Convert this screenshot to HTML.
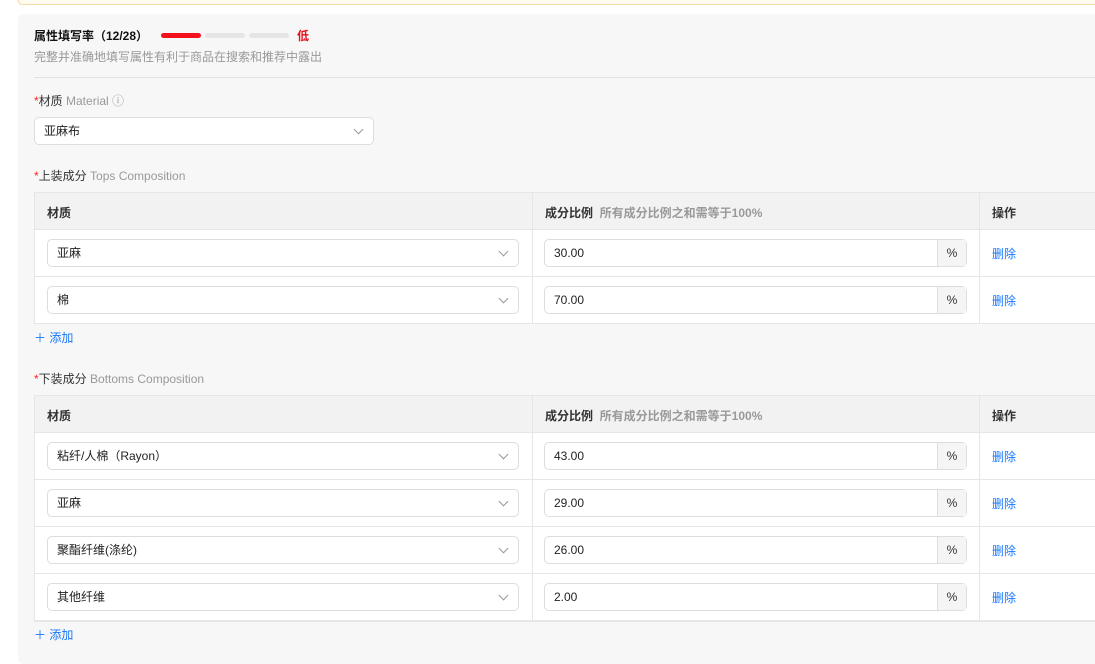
<!DOCTYPE html>
<html><head><meta charset="utf-8"><style>
*{box-sizing:border-box;margin:0;padding:0}
body{width:1095px;height:652px;overflow:hidden;background:#fff;font-family:"Liberation Sans","Noto Sans CJK SC",sans-serif;font-size:12px;color:#333;position:relative}
.banner{position:absolute;left:18px;top:-10px;width:1090px;height:15px;border:1px solid #f5d9a8;background:#fffbf0;border-radius:4px}
.panel{position:absolute;left:18px;top:14px;width:1090px;height:650px;background:#f7f7f7;border-radius:6px}
.abs{position:absolute;white-space:nowrap}
.title{left:34px;top:27px;font-weight:bold;font-size:12px;color:#111}
.bar{top:33px;height:5px;border-radius:3px}
.sub{left:34px;top:48px;color:#999}
.hr{left:34px;top:77px;width:1061px;height:1px;background:#e2e2e2}
.label{left:34px;font-size:12px;color:#333}
.label .r{color:#f22}.label .en{color:#999}
.sel{background:#fff;border:1px solid #ddd;border-radius:5px;height:28px;padding-left:9px;line-height:26px;color:#222}
.sel:after{content:"";position:absolute;right:11px;top:8px;width:6px;height:6px;border-right:1px solid #999;border-bottom:1px solid #999;transform:rotate(45deg)}
.tbl{left:34px;width:1070px;border:1px solid #e6e6e6;background:#fff}
.th{position:absolute;left:0;top:0;width:100%;height:37px;background:#f2f2f2;border-bottom:1px solid #e6e6e6}
.th span{position:absolute;top:11px;font-weight:bold;color:#333;white-space:nowrap}
.th span span{position:static;color:#999}
.vl{position:absolute;top:0;bottom:0;width:1px;background:#e6e6e6}
.row{position:absolute;left:0;width:100%;height:47px;border-bottom:1px solid #e6e6e6}
.inp{position:absolute;left:509px;top:9px;width:423px;height:28px;border:1px solid #ddd;border-radius:5px;background:#fff}
.inp .v{position:absolute;left:9px;top:6px;color:#222}
.inp .p{position:absolute;right:0;top:0;width:29px;height:26px;background:#f5f5f5;border-left:1px solid #ddd;text-align:center;line-height:26px;color:#333}
.del{position:absolute;left:957px;top:15px;color:#1677ff}
.add{left:34px;color:#1677ff}
</style></head><body>
<div class="banner"></div>
<div class="panel"></div>
<div class="abs title">属性填写率（12/28）</div>
<div class="abs bar" style="left:161px;width:40px;background:#f5111b"></div>
<div class="abs bar" style="left:205px;width:40px;background:#e5e5e5"></div>
<div class="abs bar" style="left:249px;width:40px;background:#e5e5e5"></div>
<div class="abs" style="left:297px;top:27px;color:#e4101a;font-weight:bold">低</div>
<div class="abs sub">完整并准确地填写属性有利于商品在搜索和推荐中露出</div>
<div class="abs hr"></div>
<div class="abs label" style="top:92px"><span class="r">*</span>材质 <span class="en">Material ⓘ</span></div>
<div class="abs sel" style="left:34px;top:117px;width:340px">亚麻布</div>
<div class="abs label" style="top:167px"><span class="r">*</span>上装成分 <span class="en">Tops Composition</span></div>
<div class="abs tbl" style="top:192px;height:132px">
<div class="th"><span style="left:12px">材质</span><span style="left:510px">成分比例 &nbsp;<span>所有成分比例之和需等于100%</span></span><span style="left:957px">操作</span></div>
<div class="row" style="top:37px"><div class="abs sel" style="left:12px;top:9px;width:472px">亚麻</div><div class="inp"><span class="v">30.00</span><span class="p">%</span></div><span class="del">删除</span></div>
<div class="row" style="top:84px"><div class="abs sel" style="left:12px;top:9px;width:472px">棉</div><div class="inp"><span class="v">70.00</span><span class="p">%</span></div><span class="del">删除</span></div>
<div class="vl" style="left:497px"></div><div class="vl" style="left:944px"></div>
</div>
<div class="abs add" style="top:329px">＋ 添加</div>
<div class="abs label" style="top:370px"><span class="r">*</span>下装成分 <span class="en">Bottoms Composition</span></div>
<div class="abs tbl" style="top:395px;height:227px">
<div class="th"><span style="left:12px">材质</span><span style="left:510px">成分比例 &nbsp;<span>所有成分比例之和需等于100%</span></span><span style="left:957px">操作</span></div>
<div class="row" style="top:37px"><div class="abs sel" style="left:12px;top:9px;width:472px">粘纤/人棉（Rayon）</div><div class="inp"><span class="v">43.00</span><span class="p">%</span></div><span class="del">删除</span></div>
<div class="row" style="top:84px"><div class="abs sel" style="left:12px;top:9px;width:472px">亚麻</div><div class="inp"><span class="v">29.00</span><span class="p">%</span></div><span class="del">删除</span></div>
<div class="row" style="top:131px"><div class="abs sel" style="left:12px;top:9px;width:472px">聚酯纤维(涤纶)</div><div class="inp"><span class="v">26.00</span><span class="p">%</span></div><span class="del">删除</span></div>
<div class="row" style="top:178px"><div class="abs sel" style="left:12px;top:9px;width:472px">其他纤维</div><div class="inp"><span class="v">2.00</span><span class="p">%</span></div><span class="del">删除</span></div>
<div class="vl" style="left:497px"></div><div class="vl" style="left:944px"></div>
</div>
<div class="abs add" style="top:626px">＋ 添加</div>
</body></html>
